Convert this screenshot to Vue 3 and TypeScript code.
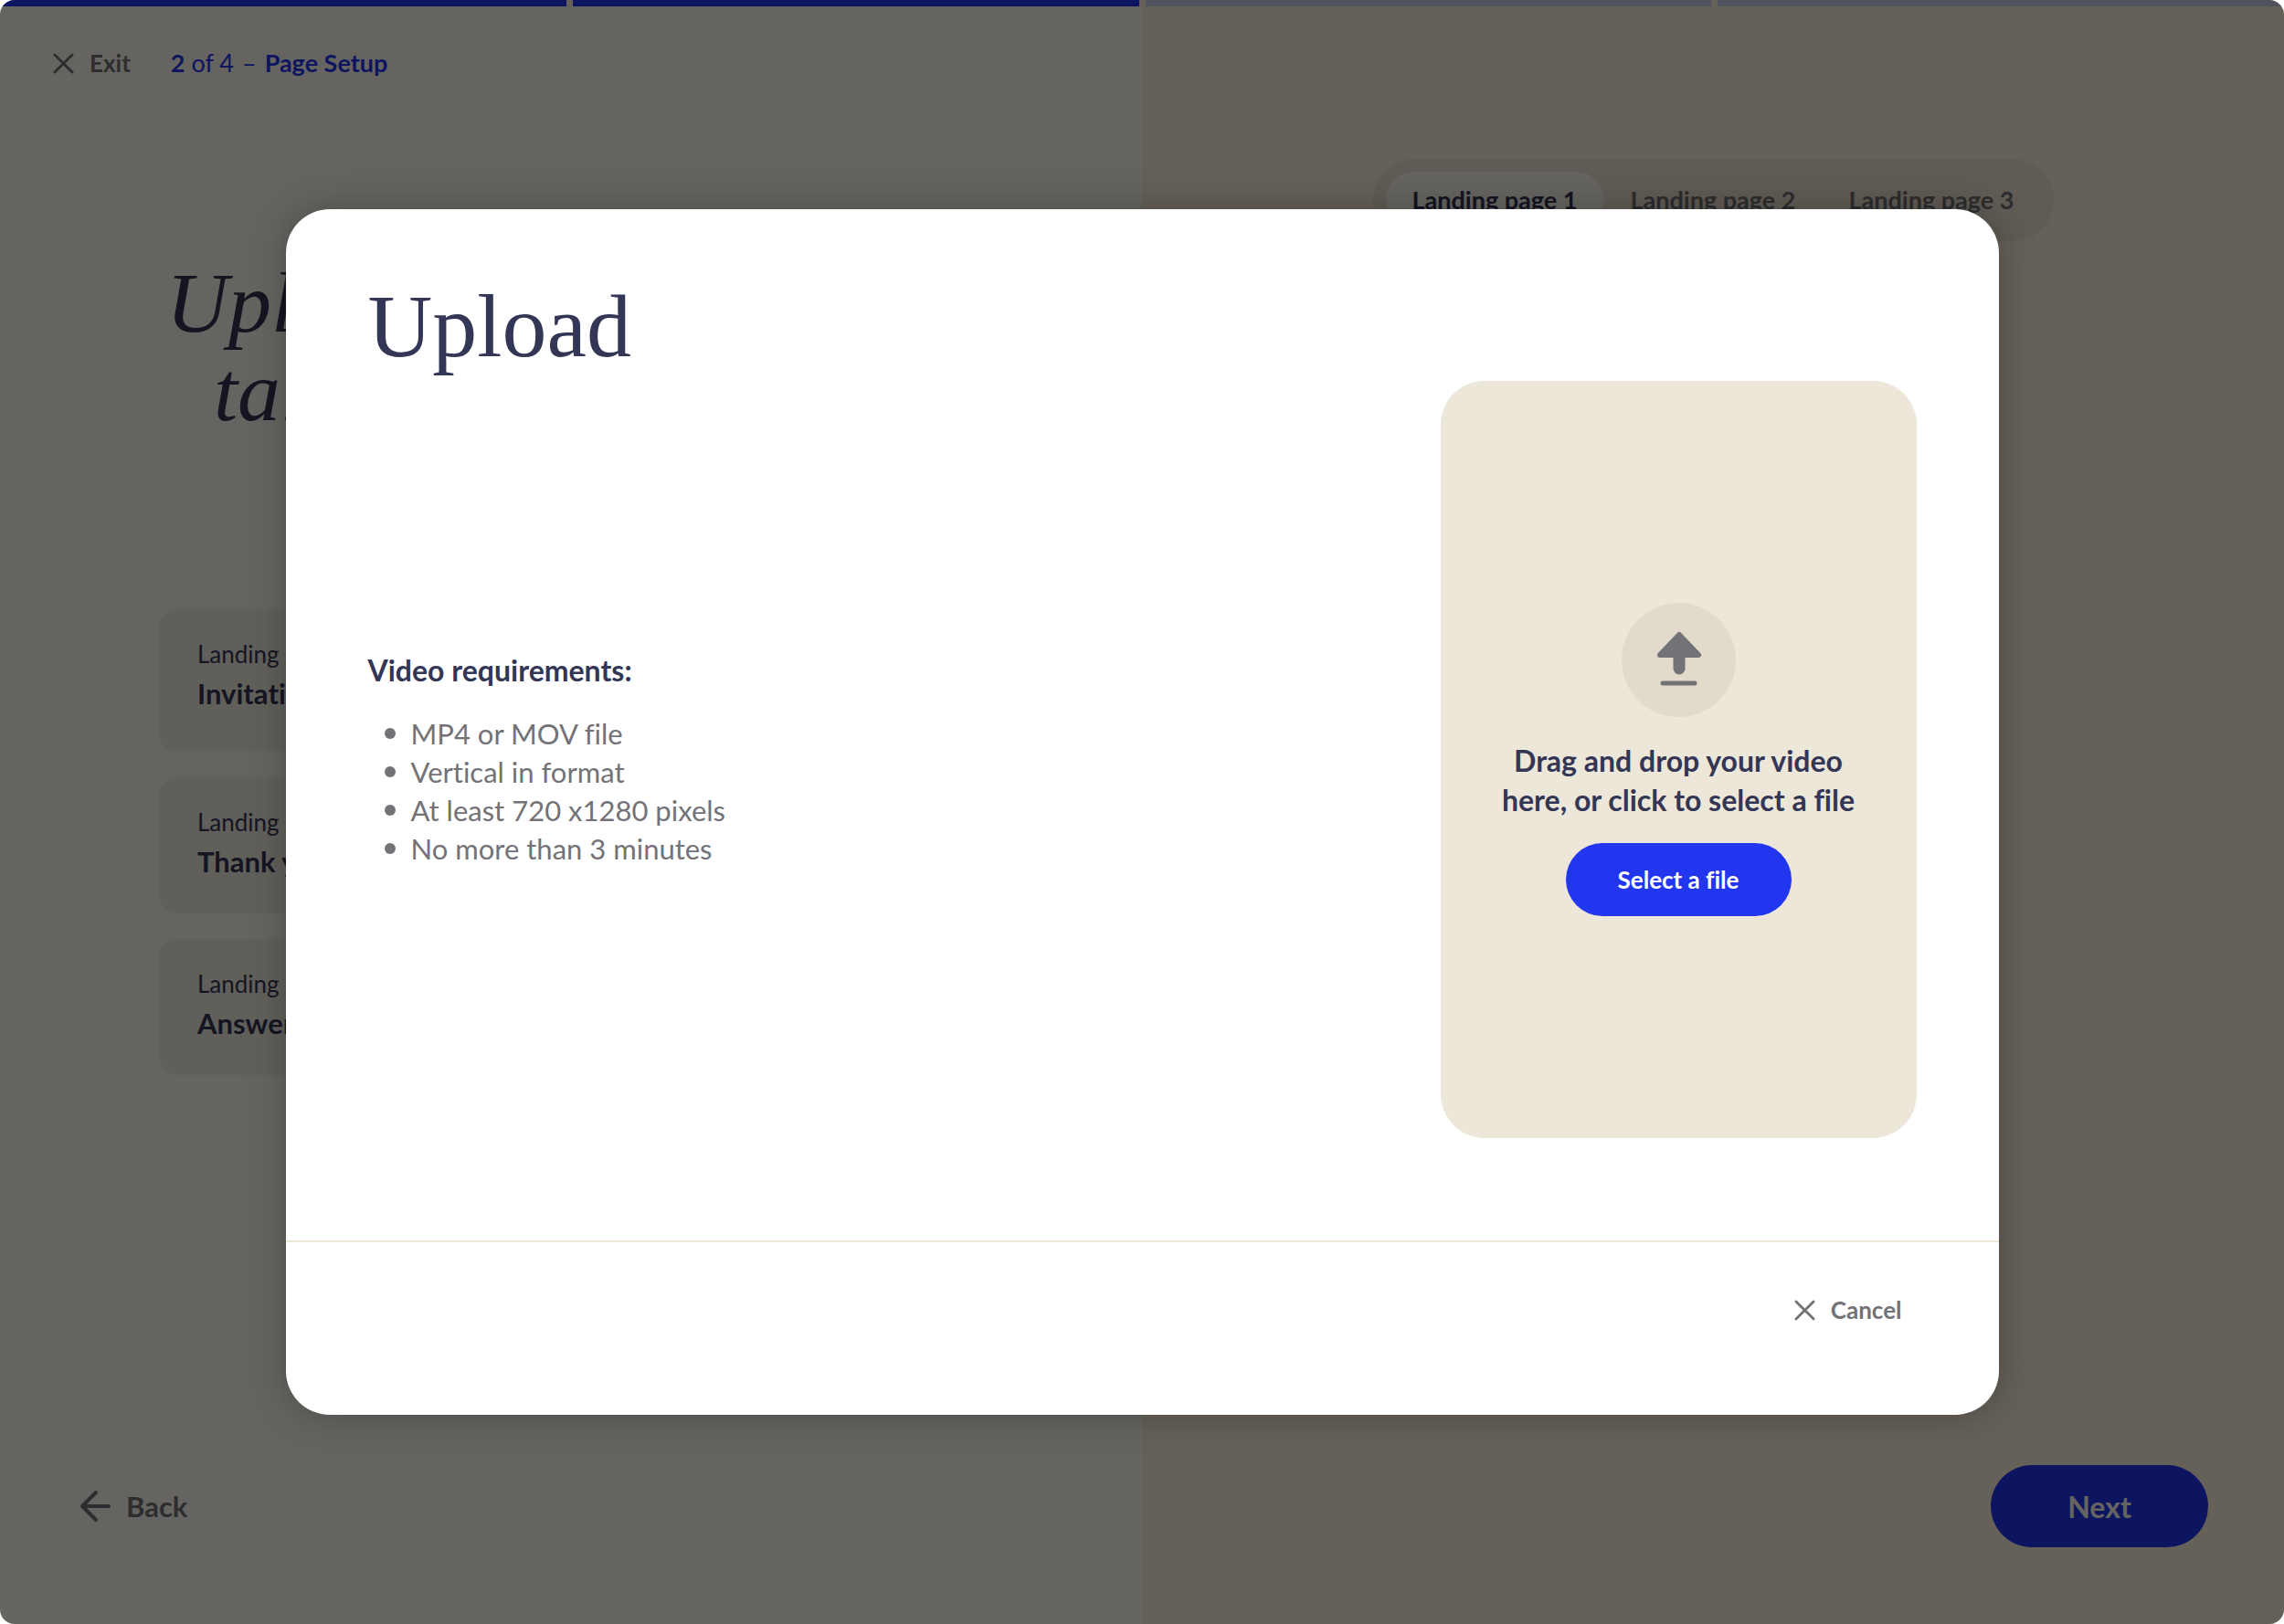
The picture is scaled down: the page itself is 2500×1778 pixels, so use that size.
<script setup lang="ts">
interface LandingPage {
  id: number
  label: string
  title: string
}

const steps: boolean[] = [true, true, false, false]

const pages: LandingPage[] = [
  { id: 1, label: 'Landing page 1', title: 'Invitation' },
  { id: 2, label: 'Landing page 2', title: 'Thank you' },
  { id: 3, label: 'Landing page 3', title: 'Answer' },
]

const requirements: string[] = [
  'MP4 or MOV file',
  'Vertical in format',
  'At least 720 x1280 pixels',
  'No more than 3 minutes',
]
</script>

<template>
  <div class="screen">
    <div class="progress" aria-hidden="true">
      <span v-for="(done, i) in steps" :key="i" class="step" :class="{ done }"></span>
    </div>

    <div class="panes">
      <section class="pane left">
        <header class="topbar">
          <button type="button" class="text-button">
            <svg class="cross" viewBox="0 0 24 24" aria-hidden="true"><path d="M2 2 L22 22 M22 2 L2 22" /></svg>
            Exit
          </button>
          <p class="where"><span><b>2</b> of 4</span><span>–</span><b>Page Setup</b></p>
        </header>

        <h1 class="headline">
          <span>Upload</span>
          <span class="indent">talks</span>
        </h1>

        <div class="cards">
          <article v-for="page in pages" :key="page.id" class="card">
            <p class="card-label">{{ page.label }}</p>
            <h2 class="card-title">{{ page.title }}</h2>
          </article>
        </div>

        <button type="button" class="text-button back">
          <svg class="arrow" viewBox="0 0 34 34" aria-hidden="true"><path d="M18 2 L3 17 L18 32 M3 17 H32" /></svg>
          Back
        </button>
      </section>

      <section class="pane right">
        <nav class="tabs">
          <button v-for="page in pages" :key="page.id" type="button" class="tab" :class="{ active: page.id === 1 }">
            {{ page.label }}
          </button>
        </nav>
        <button type="button" class="next">Next</button>
      </section>
    </div>

    <div class="overlay">
      <div class="modal" role="dialog" aria-modal="true" aria-labelledby="upload-title">
        <div class="modal-body">
          <h2 id="upload-title" class="modal-title">Upload</h2>
          <div class="modal-row">
            <div class="requirements">
              <h3>Video requirements:</h3>
              <ul>
                <li v-for="item in requirements" :key="item">{{ item }}</li>
              </ul>
            </div>
            <div class="dropzone">
              <div class="upload-icon">
                <svg viewBox="0 0 52 60" aria-hidden="true">
                  <path class="head" d="M27 2 L48 24 H6 Z" />
                  <path class="stem" d="M27 20 V39" />
                  <path class="base" d="M9 55 H44" />
                </svg>
              </div>
              <p class="drop-text">Drag and drop your video<br />here, or click to select a file</p>
              <button type="button" class="select">Select a file</button>
            </div>
          </div>
        </div>
        <footer class="modal-footer">
          <button type="button" class="text-button cancel">
            <svg class="cross" viewBox="0 0 24 24" aria-hidden="true"><path d="M2 2 L22 22 M22 2 L2 22" /></svg>
            Cancel
          </button>
        </footer>
      </div>
    </div>
  </div>
</template>

<style>
body {
  margin: 0;
  background: #fff;
}
</style>

<style scoped>
.screen {
  position: relative;
  display: flex;
  flex-direction: column;
  min-height: 100vh;
  overflow: hidden;
  border-radius: 16px;
  background: #fdf0dc;
  color: #333654;
  font-family: Lato, "Liberation Sans", sans-serif;
  font-size: 26px;
  font-variant-ligatures: none;
}
h1, h2, h3, p, ul {
  margin: 0;
  padding: 0;
}
button {
  border: 0;
  padding: 0;
  background: none;
  color: inherit;
  font: inherit;
  font-weight: 700;
  font-variant-ligatures: none;
  cursor: pointer;
}
svg {
  display: block;
  overflow: visible;
  fill: none;
  stroke: currentColor;
  stroke-linecap: round;
  stroke-linejoin: round;
}
.progress {
  display: grid;
  grid-template-columns: repeat(4, 1fr);
  gap: 7px;
}
.step {
  height: 7px;
  background: #c7cdec;
}
.step.done {
  background: #2236f0;
}
.panes {
  flex: 1;
  display: grid;
  grid-template-columns: 1fr 1fr;
}
.pane {
  display: flex;
  flex-direction: column;
}
.left {
  background: #fdf9ef;
}
.right {
  align-items: center;
  background: #fdf0dc;
}
.topbar {
  display: flex;
  align-items: center;
  gap: 44px;
  padding: 44px 58px 0;
  line-height: 36px;
}
.text-button {
  display: flex;
  align-items: center;
  gap: 17px;
  color: #727277;
}
.cross {
  width: 23px;
  height: 23px;
  stroke-width: 3px;
}
.where {
  display: flex;
  gap: 9px;
  color: #2236f0;
  font-size: 27px;
}
.where b {
  font-weight: 700;
}
.headline {
  display: flex;
  flex-direction: column;
  padding: 196px 0 0 182px;
  font: italic 400 94px/97px "Liberation Serif", serif;
}
.indent {
  padding-left: 52px;
}
.cards {
  display: flex;
  flex-direction: column;
  gap: 28px;
  padding: 190px 174px 0;
}
.card {
  padding: 28px 42px 35px;
  border-radius: 20px;
  background: #f3ede2;
}
.card:first-child {
  padding-bottom: 42px;
}
.card-label {
  line-height: 43px;
}
.card-title {
  font-size: 31px;
  line-height: 43px;
  font-weight: 700;
}
.back {
  align-self: flex-start;
  margin: auto 0 0 87px;
  padding-bottom: 84px;
  font-size: 31px;
  line-height: 90px;
}
.arrow {
  width: 34px;
  height: 34px;
  stroke-width: 4px;
}
.tabs {
  display: flex;
  box-sizing: border-box;
  height: 90px;
  margin-top: 167px;
  padding: 14px;
  border-radius: 45px;
  background: #f0e4d1;
}
.tab {
  width: 239px;
  padding-bottom: 2px;
  border-radius: 31px;
  color: #727277;
  font-size: 27px;
}
.tab.active {
  background: #fdf9ef;
  color: #333654;
}
.next {
  align-self: flex-end;
  width: 238px;
  height: 90px;
  margin: auto 83px 84px 0;
  border-radius: 45px;
  background: #2236f0;
  color: #fdf9ef;
  font-size: 32px;
}
.overlay {
  position: absolute;
  inset: 0;
  display: flex;
  align-items: center;
  justify-content: center;
  background: rgba(0, 0, 0, 0.6);
}
.modal {
  width: 75%;
  border-radius: 48px;
  background: #fff;
  box-shadow: 0 0 40px rgba(0, 0, 0, 0.25);
}
.modal-body {
  padding: 72px 90px 112px;
}
.modal-title {
  padding-bottom: 3px;
  font: 400 98px/113px "Liberation Serif", serif;
}
.modal-row {
  display: flex;
  align-items: center;
  justify-content: space-between;
}
.requirements h3 {
  font-size: 32px;
  line-height: 42px;
  font-weight: 700;
}
.requirements ul {
  padding-top: 27px;
  list-style: none;
  color: #727277;
  font-size: 31px;
  line-height: 42px;
}
.requirements li {
  display: flex;
  align-items: center;
  gap: 17px;
  padding-left: 18px;
}
.requirements li::before {
  width: 12px;
  height: 12px;
  border-radius: 50%;
  background: #727277;
  content: "";
}
.dropzone {
  display: flex;
  flex-direction: column;
  align-items: center;
  justify-content: center;
  box-sizing: border-box;
  width: 521px;
  height: 829px;
  border-radius: 48px;
  background: #ede7d9;
}
.upload-icon {
  display: flex;
  align-items: center;
  justify-content: center;
  width: 125px;
  height: 125px;
  border-radius: 50%;
  background: #e2dbcb;
  color: #727277;
}
.upload-icon svg {
  width: 52px;
  height: 60px;
}
.head {
  fill: currentColor;
  stroke-width: 6px;
}
.stem {
  stroke-width: 13px;
}
.base {
  stroke-width: 5px;
}
.drop-text {
  padding: 26px 0;
  text-align: center;
  font-size: 32px;
  line-height: 43px;
  font-weight: 700;
}
.select {
  width: 247px;
  height: 80px;
  border-radius: 40px;
  background: #2236f0;
  color: #fff;
}
.modal-footer {
  display: flex;
  justify-content: flex-end;
  padding: 55px 106px 96px;
  border-top: 2px solid #ede7d9;
}
.cancel {
  line-height: 38px;
}
</style>
